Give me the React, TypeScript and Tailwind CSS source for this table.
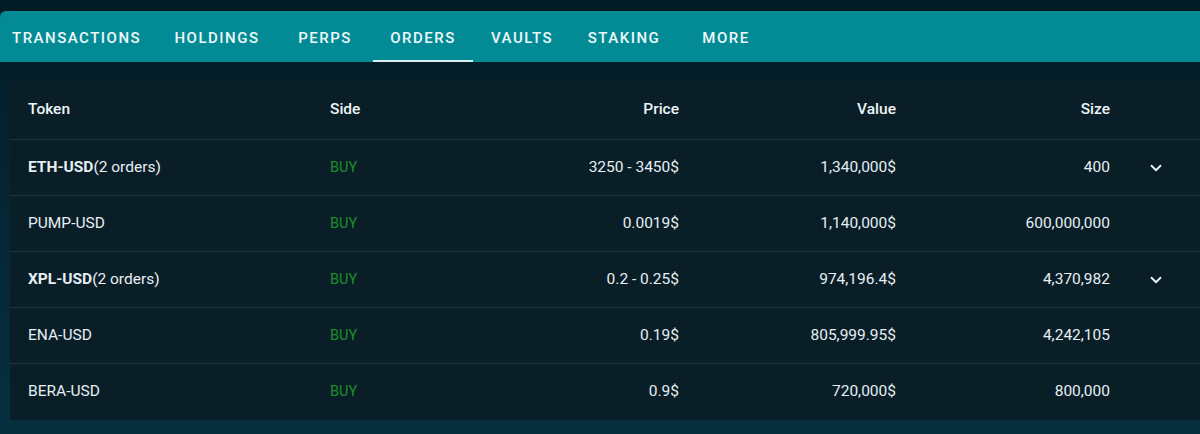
import { ChevronDown } from "lucide-react";

type OrderRow = {
  token: string;
  count?: number;
  side: string;
  price: string;
  value: string;
  size: string;
};

const tabs = [
  { label: "TRANSACTIONS", width: "w-[157px]", extra: "justify-start pl-[12px]" },
  { label: "HOLDINGS", width: "w-[120px]", extra: "justify-center" },
  { label: "PERPS", width: "w-[96px]", extra: "justify-center" },
  { label: "ORDERS", width: "w-[100px]", extra: "justify-center", active: true },
  { label: "VAULTS", width: "w-[98px]", extra: "justify-center" },
  { label: "STAKING", width: "w-[106px]", extra: "justify-center" },
  { label: "MORE", width: "w-[98px]", extra: "justify-center" }
];

const orders: OrderRow[] = [
  { token: "ETH-USD", count: 2, side: "BUY", price: "3250 - 3450$", value: "1,340,000$", size: "400" },
  { token: "PUMP-USD", side: "BUY", price: "0.0019$", value: "1,140,000$", size: "600,000,000" },
  { token: "XPL-USD", count: 2, side: "BUY", price: "0.2 - 0.25$", value: "974,196.4$", size: "4,370,982" },
  { token: "ENA-USD", side: "BUY", price: "0.19$", value: "805,999.95$", size: "4,242,105" },
  { token: "BERA-USD", side: "BUY", price: "0.9$", value: "720,000$", size: "800,000" }
];

const cols = "grid grid-cols-[302px_200px_149px_217px_214px_92px] pl-[18px] items-center";

function App() {
  return (
    <div className="w-[1200px] h-[434px] overflow-hidden bg-gradient-to-b from-[#031b25] via-[#052634] to-[#07303f] pt-[11px] font-['Roboto',sans-serif] text-[#e6eff3]">
      <nav className="flex h-[51px] items-stretch rounded-tl-md bg-[#038b95]">
        {tabs.map((tab) => (
          <div
            key={tab.label}
            className={`relative flex items-center ${tab.width} ${tab.extra} pt-[4px] text-[15px] font-medium tracking-[1.5px] text-[#eef8f9]`}
          >
            {tab.label}
            {tab.active ? (
              <span className="absolute bottom-0 left-0 right-0 h-[2px] bg-[#d4f1f2]" />
            ) : null}
          </div>
        ))}
      </nav>

      <div className="ml-[10px] mt-[18px] h-[340px] rounded-l-sm bg-[#0a1e28] text-[15.5px]">
        <div className={`${cols} h-[59px] font-medium text-[#eef4f6]`}>
          <span>Token</span>
          <span>Side</span>
          <span className="text-right">Price</span>
          <span className="text-right">Value</span>
          <span className="text-right">Size</span>
          <span />
        </div>

        {orders.map((row) => (
          <div key={row.token} className={`${cols} h-[56px] border-t border-[#1d3843]`}>
            <span>
              <span className={row.count ? "font-bold" : ""}>{row.token}</span>
              {row.count ? `(${row.count} orders)` : ""}
            </span>
            <span className="text-[14.5px] text-[#1c8f2c]">{row.side}</span>
            <span className="text-right">{row.price}</span>
            <span className="text-right">{row.value}</span>
            <span className="text-right">{row.size}</span>
            <span className="flex justify-center">
              {row.count ? <ChevronDown size={18} strokeWidth={2.5} className="text-[#e8f0f3]" /> : null}
            </span>
          </div>
        ))}
      </div>
    </div>
  );
}

export default App;
